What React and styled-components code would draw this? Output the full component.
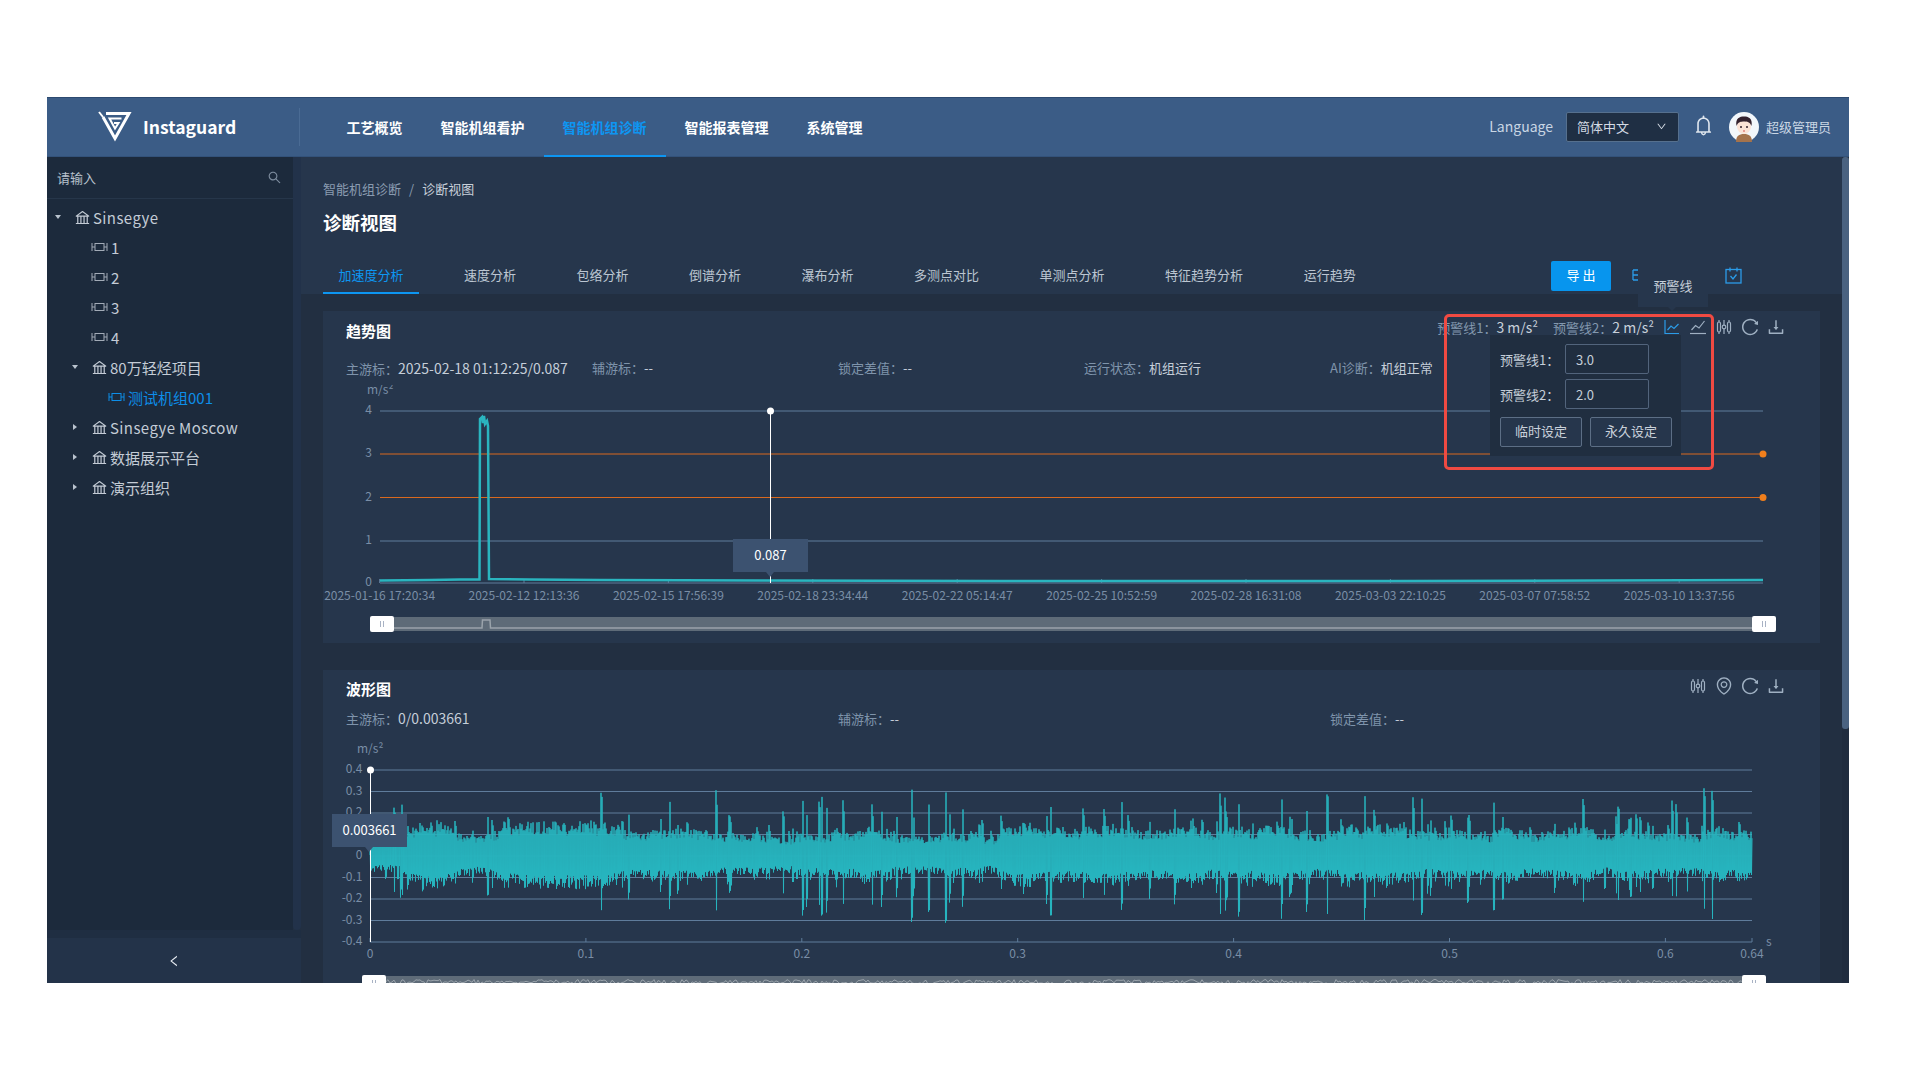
import React from 'react'
import styled, { createGlobalStyle } from 'styled-components'
import {
  AiOutlineBank,
  AiOutlineBell,
  AiOutlineDown,
  AiOutlineDownload,
  AiOutlineEnvironment,
  AiOutlineLeft,
  AiOutlineReload,
  AiOutlineSearch,
} from 'react-icons/ai'

const GlobalStyle = createGlobalStyle`
  html, body {
    margin: 0;
    background: #fff;
    overflow: hidden;
  }
  body {
    font-family: "Noto Sans CJK SC", "Noto Sans", sans-serif;
    font-size: 13px;
  }
`

const Frame = styled.div`
  display: flex;
  flex-direction: column;
  width: 1802px;
  height: 886px;
  margin: 97px 0 0 47px;
  overflow: hidden;
  background: #222f41;
`

const TopBar = styled.header`
  flex: none;
  display: flex;
  align-items: center;
  height: 60px;
  background: #3b5c86;
  box-shadow: inset 0 1px 0 #2c4a70, inset 0 -1px 0 #33527a;
`

const Brand = styled.div`
  display: flex;
  align-items: center;
  gap: 11px;
  width: 252px;
  padding-left: 51px;
  padding-bottom: 1px;
  box-sizing: border-box;
  color: #fff;
  font-size: 17.5px;
  font-weight: 700;
`

const Divider = styled.span`
  width: 1px;
  height: 38px;
  background: #4a6b94;
`

const Nav = styled.nav`
  display: flex;
  height: 100%;
  margin-left: 27.5px;
`

const NavItem = styled.a`
  display: flex;
  align-items: center;
  box-sizing: border-box;
  padding: 0 19px;
  color: ${p => (p.$active ? '#0d96f2' : '#fff')};
  font-size: 14px;
  font-weight: 700;
  box-shadow: ${p => (p.$active ? 'inset 0 -2px 0 #0d96f2' : 'none')};
`

const UserArea = styled.div`
  display: flex;
  align-items: center;
  margin-left: auto;
  padding-right: 18px;
  color: #c9d6e4;
`

const LangLabel = styled.span`
  margin-right: 13px;
  padding-bottom: 2px;
  font-size: 14px;
`

const LangSelect = styled.div`
  display: flex;
  align-items: center;
  justify-content: space-between;
  box-sizing: border-box;
  width: 113px;
  height: 30px;
  padding: 0 11px 2px 10px;
  background: #1f2f44;
  border: 1px solid #56708e;
  border-radius: 2px;
  color: #d4dbe4;
`

const Bell = styled(AiOutlineBell)`
  margin: 0 14px 4px 13px;
  font-size: 23px;
  color: #dfe6ee;
`

const UserName = styled.span`
  margin-left: 7px;
  padding-bottom: 2px;
`

const Body = styled.div`
  flex: 1;
  display: flex;
  min-height: 0;
`

const Side = styled.aside`
  flex: none;
  display: flex;
  flex-direction: column;
  width: 254px;
`

const SideTop = styled.div`
  flex: 1;
  display: flex;
  min-height: 0;
  border-bottom: 8px solid #1f2e42;
`

const SideMain = styled.div`
  flex: 1;
  background: #1c2a3c;
`

const SideRail = styled.div`
  flex: none;
  width: 8px;
  background: #22324a;
  border-radius: 0 0 4px 4px;
`

const Search = styled.div`
  display: flex;
  align-items: center;
  justify-content: space-between;
  height: 42px;
  padding: 0 11px 0 10px;
  border-bottom: 1px solid #26364a;
  box-sizing: border-box;
  color: #b7c1cd;
  svg {
    font-size: 15px;
    color: #7d8c9e;
  }
`

const Tree = styled.ul`
  margin: 0;
  padding: 4px 0 0;
  list-style: none;
`

const TreeRow = styled.li`
  display: flex;
  align-items: center;
  height: 28px;
  padding-bottom: 2px;
  padding-left: ${p => 8 + p.$level * 17}px;
  color: ${p => (p.$active ? '#0d8ee9' : '#c4ccd6')};
  font-size: 15px;
  letter-spacing: ${p => (p.$latin ? '0.4px' : '0')};
`

const Caret = styled.span`
  flex: none;
  width: 6px;
  height: 6px;
  margin-right: 13px;
  position: relative;
  &::before {
    content: '';
    position: absolute;
    display: ${p => (p.$open === undefined ? 'none' : 'block')};
    left: ${p => (p.$open ? 0 : 1)}px;
    top: ${p => (p.$open ? 1 : 0)}px;
    border-style: solid;
    border-color: transparent;
    border-width: ${p => (p.$open ? '4px 3px 0 3px' : '3px 0 3px 4px')};
    border-top-color: ${p => (p.$open ? '#b9c3ce' : 'transparent')};
    border-left-color: ${p => (p.$open ? 'transparent' : '#b9c3ce')};
  }
`

const BankIcon = styled(AiOutlineBank)`
  flex: none;
  margin-right: 2px;
  font-size: 17px;
`

const MachineSvg = styled.svg`
  flex: none;
  width: 17px;
  height: 10px;
  margin: 0 3px 0 0;
  fill: none;
  stroke: currentColor;
  stroke-width: 1;
  opacity: ${p => (p.$active ? 1 : 0.8)};
`

const SideFoot = styled.div`
  flex: none;
  display: flex;
  align-items: center;
  justify-content: center;
  height: 45px;
  background: #233349;
  color: #e8edf3;
  font-size: 14px;
`

const Main = styled.main`
  flex: 1;
  display: flex;
  min-width: 0;
`

const MainScroll = styled.div`
  flex: 1;
  min-width: 0;
  overflow: hidden;
`

const ScrollTrack = styled.div`
  flex: none;
  width: 7px;
  background: #202c3e;
`

const ScrollThumb = styled.div`
  height: 572px;
  background: #4a6280;
  border-radius: 3px;
`

const PageHead = styled.section`
  padding: 23px 0 0 22px;
  background: #26364c;
`

const Crumbs = styled.div`
  display: flex;
  gap: 8px;
  height: 18px;
  line-height: 18px;
  color: #8a9bb0;
`

const CrumbNow = styled.span`
  color: #c8d0da;
`

const Title = styled.h1`
  margin: 11px 0 0;
  height: 26px;
  line-height: 26px;
  color: #fff;
  font-size: 18.5px;
  font-weight: 700;
`

const TabBar = styled.div`
  position: relative;
  display: flex;
  align-items: center;
  height: 37px;
  margin-top: 22px;
`

const Tab = styled.a`
  display: flex;
  align-items: center;
  box-sizing: border-box;
  height: 100%;
  padding: 0 15.5px 3px;
  margin-right: 29.5px;
  color: ${p => (p.$active ? '#0d96f2' : '#bcc6d2')};
  box-shadow: ${p => (p.$active ? 'inset 0 -2px 0 #0d96f2' : 'none')};
`

const TabActions = styled.div`
  display: flex;
  align-items: center;
  margin-left: auto;
  padding-right: 100px;
`

const ExportButton = styled.button`
  width: 60px;
  height: 30px;
  margin-right: 21px;
  padding: 0 0 2px;
  border: 0;
  border-radius: 2px;
  background: #0795ee;
  color: #fff;
  font: inherit;
`

const ActionSvg = styled.svg`
  display: block;
  width: 17px;
  height: 17px;
  fill: none;
  stroke: #2b9ce8;
  stroke-width: 1.3;
  margin-left: ${p => p.$ml || 0}px;
`

const Hint = styled.div`
  position: absolute;
  left: 1315px;
  top: 6px;
  display: flex;
  align-items: center;
  justify-content: center;
  width: 70px;
  height: 44px;
  padding-top: 1px;
  box-sizing: border-box;
  background: #26364c;
  color: #c5ced9;
  z-index: 3;
  &::after {
    content: '';
    position: absolute;
    left: 30px;
    bottom: -4px;
    border-style: solid;
    border-width: 4px 4px 0 4px;
    border-color: #26364c transparent transparent transparent;
  }
`

const Content = styled.div`
  padding: 17px 22px 0;
`

const Panel = styled.section`
  position: relative;
  margin-bottom: 27px;
  background: #26364c;
`

const PanelHead = styled.div`
  display: flex;
  justify-content: space-between;
  box-sizing: border-box;
  height: ${p => p.$h}px;
  padding: 0 36px 3px 23px;
`

const PanelTitle = styled.h2`
  margin: 0;
  align-self: center;
  color: #fff;
  font-size: 15px;
  font-weight: 700;
`

const Tools = styled.div`
  display: flex;
  align-items: center;
  gap: 10px;
  height: 16px;
  margin-top: 8px;
  color: #9fb0c2;
`

const ToolSvg = styled.svg`
  flex: none;
  width: 16px;
  height: 16px;
  fill: none;
  stroke: ${p => (p.$active ? '#2b9ce8' : '#9fb0c2')};
  stroke-width: 1.2;
`

const RefreshIcon = styled(AiOutlineReload)`
  flex: none;
  margin: 0 -2px;
  font-size: 20px;
`

const PinIcon = styled(AiOutlineEnvironment)`
  flex: none;
  margin: 0 -2px;
  font-size: 20px;
`

const SaveIcon = styled(AiOutlineDownload)`
  flex: none;
  margin: 0 -2px;
  font-size: 20px;
`

const Limit = styled.span`
  color: #8398ae;
  white-space: nowrap;
  margin-right: ${p => p.$mr || 0}px;
  padding-bottom: 1px;
`

const LimitValue = styled.span`
  color: #c8d0da;
  font-size: 14px;
`

const InfoRow = styled.div`
  display: grid;
  grid-template-columns: repeat(${p => p.$cols}, ${p => p.$w}px);
  align-items: center;
  box-sizing: border-box;
  height: ${p => p.$h}px;
  margin-top: ${p => p.$mt || 0}px;
  padding: 0 0 3px 23px;
  color: #7f94ab;
`

const InfoValue = styled.span`
  color: #c5ced9;
  font-size: ${p => (p.$latin ? 14 : 13)}px;
`

const ChartWrap = styled.div`
  position: relative;
  height: ${p => p.$h}px;
`

const ChartSvg = styled.svg`
  display: block;
  width: 1497px;
  height: 100%;
`

const AxisText = styled.text`
  fill: #7a8ea6;
  font-size: 12px;
`

const CursorTip = styled.div`
  position: absolute;
  left: ${p => p.$x}px;
  top: ${p => p.$y}px;
  display: flex;
  align-items: center;
  justify-content: center;
  box-sizing: border-box;
  width: 75px;
  height: 33px;
  padding-bottom: 2px;
  background: #3c5270;
  color: #fff;
  &::after {
    content: '';
    position: absolute;
    left: 33px;
    bottom: -5px;
    border-style: solid;
    border-width: 5px 4px 0 4px;
    border-color: #3c5270 transparent transparent transparent;
  }
`

const Slider = styled.div`
  display: flex;
  align-items: center;
  width: ${p => p.$w}px;
  height: 16px;
  margin-left: ${p => p.$ml}px;
  padding-bottom: 11px;
`

const SliderHandle = styled.span`
  position: relative;
  flex: none;
  width: 24px;
  height: 16px;
  background: #fff;
  border-radius: 2px;
  z-index: 1;
  &::before {
    content: '';
    position: absolute;
    left: 10px;
    top: 5px;
    width: 1px;
    height: 6px;
    background: #a8b2c4;
    box-shadow: 3px 0 0 #a8b2c4;
  }
`

const SliderTrack = styled.svg`
  flex: 1;
  height: 14px;
  min-width: 0;
  background: #5e6b78;
`

const Annotation = styled.div`
  position: absolute;
  left: 1121px;
  top: 3px;
  width: 270px;
  height: 156px;
  box-sizing: border-box;
  border: 3px solid #f04a42;
  border-radius: 5px;
  z-index: 4;
  pointer-events: none;
`

const Popover = styled.div`
  position: absolute;
  left: 1167px;
  top: 24px;
  z-index: 2;
  box-sizing: border-box;
  width: 191px;
  height: 121px;
  padding: 9px 9px 0 10px;
  background: #202e40;
  color: #c5ced9;
`

const FieldRow = styled.label`
  display: flex;
  align-items: center;
  justify-content: space-between;
  height: 30px;
  margin: 0 23px 5px 0;
`

const FieldBox = styled.span`
  display: flex;
  align-items: center;
  box-sizing: border-box;
  width: 84px;
  height: 30px;
  padding-left: 10px;
  border: 1px solid #52647c;
  border-radius: 2px;
`

const PopButtons = styled.div`
  display: flex;
  justify-content: space-between;
  margin-top: 8px;
`

const PopButton = styled.button`
  width: 82px;
  height: 30px;
  padding: 0 0 3px;
  background: #26364c;
  border: 1px solid #5c6e85;
  border-radius: 2px;
  color: #c9d1db;
  font: inherit;
`

const NAV = ['工艺概览', '智能机组看护', '智能机组诊断', '智能报表管理', '系统管理']
const TABS = ['加速度分析', '速度分析', '包络分析', '倒谱分析', '瀑布分析', '多测点对比', '单测点分析', '特征趋势分析', '运行趋势']
const TREND_LABELS = [
  '2025-01-16 17:20:34',
  '2025-02-12 12:13:36',
  '2025-02-15 17:56:39',
  '2025-02-18 23:34:44',
  '2025-02-22 05:14:47',
  '2025-02-25 10:52:59',
  '2025-02-28 16:31:08',
  '2025-03-03 22:10:25',
  '2025-03-07 07:58:52',
  '2025-03-10 13:37:56',
]
const WAVE_Y = ['0.4', '0.3', '0.2', '0.1', '0', '-0.1', '-0.2', '-0.3', '-0.4']
const WAVE_X = ['0', '0.1', '0.2', '0.3', '0.4', '0.5', '0.6']

const rng = seed => () => {
  seed = (seed + 0x6d2b79f5) | 0
  let t = Math.imul(seed ^ (seed >>> 15), 1 | seed)
  t = (t + Math.imul(t ^ (t >>> 7), 61 | t)) ^ t
  return ((t ^ (t >>> 14)) >>> 0) / 4294967296
}

// vibration trace: solid lumpy core with lots of teeth sticking out of it
const buildWave = () => {
  const rand = rng(20250218)
  const cy = 855
  let d = `M370 ${cy}`
  let lump = 0
  let target = 0
  let hold = 0
  let held = 0
  for (let x = 370; x <= 1752; x += 0.5) {
    if (rand() < 0.04) target = rand() * 16
    lump += (target - lump) * 0.05
    const up = Math.round(x * 2) % 2 === 0
    let mag = (14 + lump) * (0.7 + 0.5 * rand())
    if (hold > 0) {
      // teeth are a couple of samples wide, as in the sampled signal
      mag = held * (0.75 + 0.25 * rand())
      hold -= 1
    } else if (rand() < 0.075) {
      const r = rand()
      held = 24 + r * r * r * 44
      mag = held
      hold = 2
    }
    d += `L${x} ${(cy + (up ? -mag : mag)).toFixed(1)}`
  }
  return d
}

const buildOverview = () => {
  const rand = rng(77)
  let d = 'M0 6'
  for (let x = 0; x < 1360; x += 2) {
    d += `L${x} ${(6 + (rand() - 0.5) * 5).toFixed(1)}`
  }
  return d
}

const WAVE_PATH = buildWave()
const OVERVIEW_PATH = buildOverview()

const Logo = () => (
  <svg width="34" height="31" viewBox="0 0 34 31" fill="none" stroke="#fff">
    <path d="M8 2.5H31L17 27.5L5 6" strokeWidth="3" />
    <path d="M1 1l4 5" strokeWidth="2" />
    <path d="M23.5 7.5H11.5L17 17.5L20.5 12H16" strokeWidth="2" />
  </svg>
)

const Avatar = () => (
  <svg width="30" height="30" viewBox="0 0 30 30">
    <circle cx="15" cy="15" r="15" fill="#f2f7fb" />
    <path d="M7 30c0-6 3-8 8-8s8 2 8 8z" fill="#a5734c" />
    <ellipse cx="15" cy="14.5" rx="7" ry="7.5" fill="#fbe3d6" />
    <path d="M7.5 14C6 6 11 4.5 15 4.5S24 6 22.5 14C21 10 18 9.5 15 9.5S9 10 7.5 14z" fill="#33222e" />
    <circle cx="12" cy="15" r="1" fill="#33222e" />
    <circle cx="18" cy="15" r="1" fill="#33222e" />
    <circle cx="15" cy="19" r="1" fill="#e2857c" />
  </svg>
)

const MachineIcon = ({ active }) => (
  <MachineSvg viewBox="0 0 16 10" $active={active}>
    <path d="M.5 1v8M.5 5h3M12.5 5h3M15.5 1v8" />
    <rect x="3.5" y="1.5" width="9" height="7" />
  </MachineSvg>
)

const AxisLineIcon = ({ active }) => (
  <ToolSvg viewBox="0 0 16 16" $active={active}>
    <path d="M1 1v13.5h14" />
    <path d="M3.5 11l3.5-4 3 2.500L14.500 5" />
  </ToolSvg>
)

const BaseLineIcon = () => (
  <ToolSvg viewBox="0 0 16 16">
    <path d="M0 14.500h16" />
    <path d="M1.500 11l4-4.500 3.500 2.500L14.500 2" />
  </ToolSvg>
)

const CandleIcon = () => (
  <ToolSvg viewBox="0 0 16 16">
    <path d="M3 1v2M3 13v2M8 1v14M13 1v2M13 13v2" />
    <rect x="1.500" y="3" width="3" height="10" rx="1.500" />
    <circle cx="8" cy="8" r="1.800" fill="#26364c" />
    <rect x="11.500" y="3" width="3" height="10" rx="1.500" />
  </ToolSvg>
)

const TreeItem = ({ level, open, icon, active, latin, children }) => (
  <TreeRow $level={level} $active={active} $latin={latin}>
    <Caret $open={open} />
    {icon === 'org' ? <BankIcon /> : <MachineIcon active={active} />}
    {children}
  </TreeRow>
)

const Trend = () => (
  <ChartWrap $h={231}>
    <ChartSvg viewBox="323 385 1497 231">
      <AxisText x="367" y="394">m/s²</AxisText>
      {[411, 454, 497.500, 541, 583].map((y, i) => (
        <g key={y}>
          <line
            x1="380"
            x2="1763"
            y1={y}
            y2={y}
            stroke={i === 1 || i === 2 ? '#d9691e' : '#5f7c9b'}
          />
          <AxisText x="372" y={y + 3} textAnchor="end">{4 - i}</AxisText>
        </g>
      ))}
      {TREND_LABELS.map((label, i) => {
        const x = 379.600 + i * 144.400
        return (
          <g key={label}>
            <line x1={x} x2={x} y1="583" y2="579" stroke="#5f7c9b" />
            <AxisText x={x} y="600" textAnchor="middle">{label}</AxisText>
          </g>
        )
      })}
      <path
        d="M380 580.500L430 580L460 579.500L479.500 579.500L480 419L482 417L483 423L484 416L485 424L487 421L488 426L489 579L530 579.500L600 580L760 580.500L1000 581L1400 581L1763 580"
        fill="none"
        stroke="#2ab5bf"
        strokeWidth="2.500"
      />
      <line x1="770.500" x2="770.500" y1="411" y2="583" stroke="#fff" />
      <circle cx="770.500" cy="411" r="3.500" fill="#fff" />
      <circle cx="1763" cy="454" r="3.500" fill="#f07f1c" />
      <circle cx="1763" cy="497.500" r="3.500" fill="#f07f1c" />
    </ChartSvg>
    <CursorTip $x={410} $y={154}>0.087</CursorTip>
  </ChartWrap>
)

const Waveform = () => (
  <ChartWrap $h={249}>
    <ChartSvg viewBox="323 726 1497 249">
      <AxisText x="357" y="753">m/s²</AxisText>
      {WAVE_Y.map((label, i) => {
        const y = 770 + i * 21.500
        return (
          <g key={label}>
            <line x1="370" x2="1752" y1={y} y2={y} stroke="#5f7c9b" />
            <AxisText x="362.500" y={y + 3} textAnchor="end">{label}</AxisText>
          </g>
        )
      })}
      {WAVE_X.map((label, i) => {
        const x = 370 + i * 215.900
        return (
          <g key={label}>
            <line x1={x} x2={x} y1="942" y2="938" stroke="#5f7c9b" />
            <AxisText x={x} y="958" textAnchor="middle">{label}</AxisText>
          </g>
        )
      })}
      <line x1="1752" x2="1752" y1="942" y2="938" stroke="#5f7c9b" />
      <AxisText x="1752" y="958" textAnchor="middle">0.64</AxisText>
      <AxisText x="1766" y="946">s</AxisText>
      <path d={WAVE_PATH} fill="none" stroke="#27b5bf" strokeWidth="1" />
      <line x1="370.500" x2="370.500" y1="770" y2="942" stroke="#fff" />
      <circle cx="370.500" cy="770" r="3.500" fill="#fff" />
    </ChartSvg>
    <CursorTip $x={9} $y={88}>0.003661</CursorTip>
  </ChartWrap>
)

const App = () => (
  <>
    <GlobalStyle />
    <Frame>
      <TopBar>
        <Brand>
          <Logo />
          Instaguard
        </Brand>
        <Divider />
        <Nav>
          {NAV.map((item, i) => (
            <NavItem key={item} $active={i === 2}>{item}</NavItem>
          ))}
        </Nav>
        <UserArea>
          <LangLabel>Language</LangLabel>
          <LangSelect>
            简体中文
            <AiOutlineDown size={11} />
          </LangSelect>
          <Bell />
          <Avatar />
          <UserName>超级管理员</UserName>
        </UserArea>
      </TopBar>
      <Body>
        <Side>
          <SideTop>
            <SideMain>
              <Search>
                请输入
                <AiOutlineSearch />
              </Search>
              <Tree>
                <TreeItem level={0} open icon="org" latin>Sinsegye</TreeItem>
                <TreeItem level={1} latin>1</TreeItem>
                <TreeItem level={1} latin>2</TreeItem>
                <TreeItem level={1} latin>3</TreeItem>
                <TreeItem level={1} latin>4</TreeItem>
                <TreeItem level={1} open icon="org">80万轻烃项目</TreeItem>
                <TreeItem level={2} active>测试机组001</TreeItem>
                <TreeItem level={1} open={false} icon="org" latin>Sinsegye Moscow</TreeItem>
                <TreeItem level={1} open={false} icon="org">数据展示平台</TreeItem>
                <TreeItem level={1} open={false} icon="org">演示组织</TreeItem>
              </Tree>
            </SideMain>
            <SideRail />
          </SideTop>
          <SideFoot>
            <AiOutlineLeft />
          </SideFoot>
        </Side>
        <Main>
          <MainScroll>
            <PageHead>
              <Crumbs>
                智能机组诊断
                <span>/</span>
                <CrumbNow>诊断视图</CrumbNow>
              </Crumbs>
              <Title>诊断视图</Title>
              <TabBar>
                {TABS.map((tab, i) => (
                  <Tab key={tab} $active={i === 0}>{tab}</Tab>
                ))}
                <TabActions>
                  <ExportButton>导 出</ExportButton>
                  <ActionSvg viewBox="0 0 17 17">
                    <path d="M1 3h15M1 8h15M1 13h15M1 3v10M8 3v10" />
                  </ActionSvg>
                  <ActionSvg viewBox="0 0 17 17" $ml={76}>
                    <rect x="1" y="2.500" width="15" height="13.500" />
                    <path d="M5 .5v4M12 .5v4M5.500 9l2.500 3 3.500-4.500" />
                  </ActionSvg>
                </TabActions>
                <Hint>预警线</Hint>
              </TabBar>
            </PageHead>
            <Content>
              <Panel>
                <PanelHead $h={42}>
                  <PanelTitle>趋势图</PanelTitle>
                  <Tools>
                    <Limit $mr={5}>预警线1：<LimitValue>3 m/s²</LimitValue></Limit>
                    <Limit>预警线2：<LimitValue>2 m/s²</LimitValue></Limit>
                    <AxisLineIcon active />
                    <BaseLineIcon />
                    <CandleIcon />
                    <RefreshIcon />
                    <SaveIcon />
                  </Tools>
                </PanelHead>
                <InfoRow $cols={5} $w={246} $h={32}>
                  <span>主游标：<InfoValue $latin>2025-02-18 01:12:25/0.087</InfoValue></span>
                  <span>辅游标：<InfoValue>--</InfoValue></span>
                  <span>锁定差值：<InfoValue>--</InfoValue></span>
                  <span>运行状态：<InfoValue>机组运行</InfoValue></span>
                  <span>AI诊断：<InfoValue>机组正常</InfoValue></span>
                </InfoRow>
                <Trend />
                <Slider $ml={47} $w={1406}>
                  <SliderHandle />
                  <SliderTrack viewBox="0 0 1358 14" preserveAspectRatio="none">
                    <path d="M0 11H88L88.500 3H96L96.500 11H1358" fill="none" stroke="#9aa3ab" strokeWidth="1.500" />
                  </SliderTrack>
                  <SliderHandle />
                </Slider>
                <Popover>
                  <FieldRow>预警线1：<FieldBox>3.0</FieldBox></FieldRow>
                  <FieldRow>预警线2：<FieldBox>2.0</FieldBox></FieldRow>
                  <PopButtons>
                    <PopButton>临时设定</PopButton>
                    <PopButton>永久设定</PopButton>
                  </PopButtons>
                </Popover>
                <Annotation />
              </Panel>
              <Panel>
                <PanelHead $h={40}>
                  <PanelTitle>波形图</PanelTitle>
                  <Tools>
                    <CandleIcon />
                    <PinIcon />
                    <RefreshIcon />
                    <SaveIcon />
                  </Tools>
                </PanelHead>
                <InfoRow $cols={3} $w={492} $h={18} $mt={-2}>
                  <span>主游标：<InfoValue $latin>0/0.003661</InfoValue></span>
                  <span>辅游标：<InfoValue>--</InfoValue></span>
                  <span>锁定差值：<InfoValue>--</InfoValue></span>
                </InfoRow>
                <Waveform />
                <Slider $ml={39} $w={1404}>
                  <SliderHandle />
                  <SliderTrack viewBox="0 0 1356 14" preserveAspectRatio="none">
                    <path d={OVERVIEW_PATH} fill="none" stroke="#9aa3ab" />
                  </SliderTrack>
                  <SliderHandle />
                </Slider>
              </Panel>
            </Content>
          </MainScroll>
          <ScrollTrack>
            <ScrollThumb />
          </ScrollTrack>
        </Main>
      </Body>
    </Frame>
  </>
)

export default App
